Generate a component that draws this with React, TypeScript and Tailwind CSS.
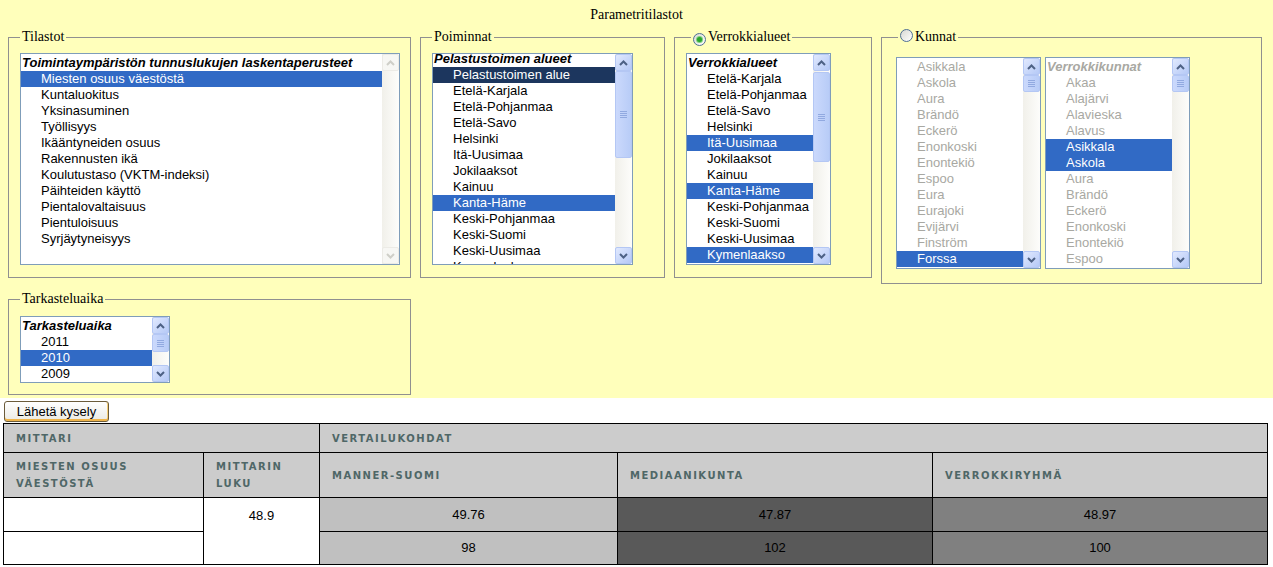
import React from 'react';
import clsx from 'clsx';

type Item = { label: string; header?: boolean; selected?: boolean; dark?: boolean };

const opts = (labels: string[], selected: string[] = []): Item[] =>
	labels.map((label) => ({ label, selected: selected.includes(label) }));

const tilastot: Item[] = [
	{ label: 'Toimintaympäristön tunnuslukujen laskentaperusteet', header: true },
	...opts(
		[
			'Miesten osuus väestöstä',
			'Kuntaluokitus',
			'Yksinasuminen',
			'Työllisyys',
			'Ikääntyneiden osuus',
			'Rakennusten ikä',
			'Koulutustaso (VKTM-indeksi)',
			'Päihteiden käyttö',
			'Pientalovaltaisuus',
			'Pientuloisuus',
			'Syrjäytyneisyys',
		],
		['Miesten osuus väestöstä'],
	),
];

const alueet = [
	'Etelä-Karjala',
	'Etelä-Pohjanmaa',
	'Etelä-Savo',
	'Helsinki',
	'Itä-Uusimaa',
	'Jokilaaksot',
	'Kainuu',
	'Kanta-Häme',
	'Keski-Pohjanmaa',
	'Keski-Suomi',
	'Keski-Uusimaa',
	'Kymenlaakso',
];

const poiminnat: Item[] = [
	{ label: 'Pelastustoimen alueet', header: true },
	{ label: 'Pelastustoimen alue', selected: true, dark: true },
	...opts(alueet, ['Kanta-Häme']),
];

const verrokkialueet: Item[] = [
	{ label: 'Verrokkialueet', header: true },
	...opts(alueet, ['Itä-Uusimaa', 'Kanta-Häme', 'Kymenlaakso']),
];

const kunnat: Item[] = opts(
	['Asikkala', 'Askola', 'Aura', 'Brändö', 'Eckerö', 'Enonkoski', 'Enontekiö', 'Espoo', 'Eura', 'Eurajoki', 'Evijärvi', 'Finström', 'Forssa'],
	['Forssa'],
);

const verrokkikunnat: Item[] = [
	{ label: 'Verrokkikunnat', header: true },
	...opts(
		['Akaa', 'Alajärvi', 'Alavieska', 'Alavus', 'Asikkala', 'Askola', 'Aura', 'Brändö', 'Eckerö', 'Enonkoski', 'Enontekiö', 'Espoo'],
		['Asikkala', 'Askola'],
	),
];

const years: Item[] = [{ label: 'Tarkasteluaika', header: true }, ...opts(['2011', '2010', '2009'], ['2010'])];

function Arrow({ up, disabled }: { up?: boolean; disabled?: boolean }) {
	return (
		<div
			className={clsx(
				'flex h-[17px] w-[17px] shrink-0 items-center justify-center rounded-[2px] border',
				disabled ? 'border-[#ecebe6] bg-[#f7f7f4]' : 'border-[#b4c7f4] bg-gradient-to-br from-[#e1e9fe] to-[#b5c9f6]',
			)}
		>
			<svg width="9" height="6" viewBox="0 0 9 6">
				<path
					d={up ? 'M1 5 L4.5 1.5 L8 5' : 'M1 1 L4.5 4.5 L8 1'}
					fill="none"
					stroke={disabled ? '#cfcfc8' : '#4d6185'}
					strokeWidth="2"
				/>
			</svg>
		</div>
	);
}

function Scrollbar({ thumbTop = 0, thumbHeight, disabled }: { thumbTop?: number; thumbHeight?: number; disabled?: boolean }) {
	return (
		<div className="flex w-[17px] shrink-0 flex-col bg-gradient-to-r from-[#f1f0ea] to-[#fdfdfb]">
			<Arrow up disabled={disabled} />
			<div className="flex-1">
				{!disabled && thumbHeight && (
					<div
						className="flex w-[17px] flex-col items-center justify-center gap-[1px] rounded-[2px] border border-[#b4c7f4] bg-gradient-to-r from-[#cbd9fc] to-[#b8ccf7]"
						style={{ marginTop: thumbTop, height: thumbHeight }}
					>
						<div className="h-px w-[7px] bg-[#91a9e0]" />
						<div className="h-px w-[7px] bg-[#91a9e0]" />
						<div className="h-px w-[7px] bg-[#91a9e0]" />
						<div className="h-px w-[7px] bg-[#91a9e0]" />
					</div>
				)}
			</div>
			<Arrow disabled={disabled} />
		</div>
	);
}

function ListBox({
	items,
	className,
	offset = 0,
	disabled,
	barDisabled,
	thumbTop,
	thumbHeight,
}: {
	items: Item[];
	className: string;
	offset?: number;
	disabled?: boolean;
	barDisabled?: boolean;
	thumbTop?: number;
	thumbHeight?: number;
}) {
	return (
		<div className={clsx('flex border border-[#7f9db9] bg-white', className)}>
			<div className="min-w-0 flex-1 overflow-hidden py-[1px]">
				<div style={{ marginTop: -offset }}>
					{items.map((it) => (
						<div
							key={it.label}
							className={clsx(
								'h-4 overflow-hidden whitespace-nowrap leading-4',
								it.header ? 'pl-[1px] font-bold italic' : 'pl-[20px]',
								it.selected
									? it.dark
										? 'bg-[#1c365e] text-white'
										: 'bg-[#316ac5] text-white'
									: disabled
										? 'text-[#a8a8a2]'
										: 'text-black',
							)}
						>
							{it.label}
						</div>
					))}
				</div>
			</div>
			<Scrollbar disabled={barDisabled} thumbTop={thumbTop} thumbHeight={thumbHeight} />
		</div>
	);
}

function Radio({ checked }: { checked?: boolean }) {
	return (
		<span className="mr-[2px] inline-flex h-[13px] w-[13px] items-center justify-center rounded-full border border-[#4f6f94] bg-gradient-to-br from-[#d8d8d2] to-white align-[-1px]">
			{checked && <span className="h-[5px] w-[5px] rounded-full bg-[#2ba52b] shadow-[0_0_0_1px_#7fd07f]" />}
		</span>
	);
}

const th =
	"border border-black px-3 text-left align-middle font-['DejaVu_Sans',Verdana,sans-serif] text-[10px] font-bold leading-[17px] tracking-[1.5px] text-[#4f6767]";
const td = 'border border-black text-center align-middle text-[13px] text-black';

export default function App() {
	return (
		<div className="min-h-[567px] bg-white font-['Liberation_Sans',Arial,sans-serif] text-[13px]">
			<div className="bg-[#ffffbb] pb-[3px]">
				<div className="h-[28px] pt-[7px] text-center font-['Liberation_Serif','Times_New_Roman',serif] text-[14px] leading-4">
					Parametritilastot
				</div>
				<div className="flex items-start gap-[9px] pl-2">
					<fieldset className="w-[403px] border border-[#909090] pb-[12px] pl-[11px] pt-[7px]">
						<legend className="h-[18px] px-[2px] font-['Liberation_Serif','Times_New_Roman',serif] text-[14px] leading-[18px]">
							Tilastot
						</legend>
						<ListBox items={tilastot} className="h-[212px] w-[380px]" barDisabled />
					</fieldset>
					<fieldset className="w-[245px] border border-[#909090] pb-[12px] pl-[11px] pt-[7px]">
						<legend className="h-[18px] px-[2px] font-['Liberation_Serif','Times_New_Roman',serif] text-[14px] leading-[18px]">
							Poiminnat
						</legend>
						<ListBox items={poiminnat} className="h-[212px] w-[201px]" offset={4} thumbTop={0} thumbHeight={87} />
					</fieldset>
					<fieldset className="w-[198px] border border-[#909090] pb-[12px] pl-[11px] pt-[7px]">
						<legend className="ml-[5px] h-[18px] px-[2px] font-['Liberation_Serif','Times_New_Roman',serif] text-[14px] leading-[18px]">
							<Radio checked />
							Verrokkialueet
						</legend>
						<ListBox items={verrokkialueet} className="h-[212px] w-[145px]" thumbTop={1} thumbHeight={90} />
					</fieldset>
					<fieldset className="w-[381px] border border-[#909090] pb-[14px] pl-[14px] pt-[11px]">
						<legend className="ml-[2px] h-[18px] px-[2px] font-['Liberation_Serif','Times_New_Roman',serif] text-[14px] leading-[18px]">
							<Radio />
							Kunnat
						</legend>
						<div className="flex gap-[4px]">
							<ListBox items={kunnat} className="h-[212px] w-[145px]" disabled thumbTop={0} thumbHeight={17} />
							<ListBox items={verrokkikunnat} className="h-[212px] w-[145px]" disabled thumbTop={0} thumbHeight={17} />
						</div>
					</fieldset>
				</div>
				<fieldset className="ml-2 mt-[6px] w-[403px] border border-[#909090] pb-[11px] pl-[11px] pt-[8px]">
					<legend className="h-[18px] px-[2px] font-['Liberation_Serif','Times_New_Roman',serif] text-[14px] leading-[18px]">
						Tarkasteluaika
					</legend>
					<ListBox items={years} className="h-[67px] w-[150px]" thumbTop={0} thumbHeight={18} />
				</fieldset>
			</div>
			<button className="ml-[4px] mt-[3px] h-[21px] w-[105px] rounded-[3px] border border-[#6b5b3a] bg-gradient-to-b from-white to-[#ebeae3] text-[13px] leading-4 text-black shadow-[inset_0_-2px_0_#f0b54a,inset_-1px_0_0_#f6cf7a]">
				Lähetä kysely
			</button>
			<table className="ml-[3px] mt-[1px] w-[1264px] table-fixed border-collapse border border-black">
				<colgroup>
					<col className="w-[200px]" />
					<col className="w-[116px]" />
					<col className="w-[298px]" />
					<col className="w-[315px]" />
					<col className="w-[335px]" />
				</colgroup>
				<tbody>
					<tr className="h-[29px] bg-[#cccccc]">
						<th colSpan={2} className={th}>
							MITTARI
						</th>
						<th colSpan={3} className={th}>
							VERTAILUKOHDAT
						</th>
					</tr>
					<tr className="h-[45px] bg-[#cccccc]">
						<th className={th}>
							MIESTEN OSUUS
							<br />
							VÄESTÖSTÄ
						</th>
						<th className={th}>
							MITTARIN
							<br />
							LUKU
						</th>
						<th className={th}>MANNER-SUOMI</th>
						<th className={th}>MEDIAANIKUNTA</th>
						<th className={th}>VERROKKIRYHMÄ</th>
					</tr>
					<tr className="h-[34px]">
						<td className={clsx(td, 'bg-white')} />
						<td rowSpan={2} className={clsx(td, 'bg-white !align-top pt-[8px]')}>
							48.9
						</td>
						<td className={clsx(td, 'bg-[#c0c0c0]')}>49.76</td>
						<td className={clsx(td, 'bg-[#595959]')}>47.87</td>
						<td className={clsx(td, 'bg-[#808080]')}>48.97</td>
					</tr>
					<tr className="h-[33px]">
						<td className={clsx(td, 'bg-white')} />
						<td className={clsx(td, 'bg-[#c0c0c0]')}>98</td>
						<td className={clsx(td, 'bg-[#595959]')}>102</td>
						<td className={clsx(td, 'bg-[#808080]')}>100</td>
					</tr>
				</tbody>
			</table>
		</div>
	);
}
